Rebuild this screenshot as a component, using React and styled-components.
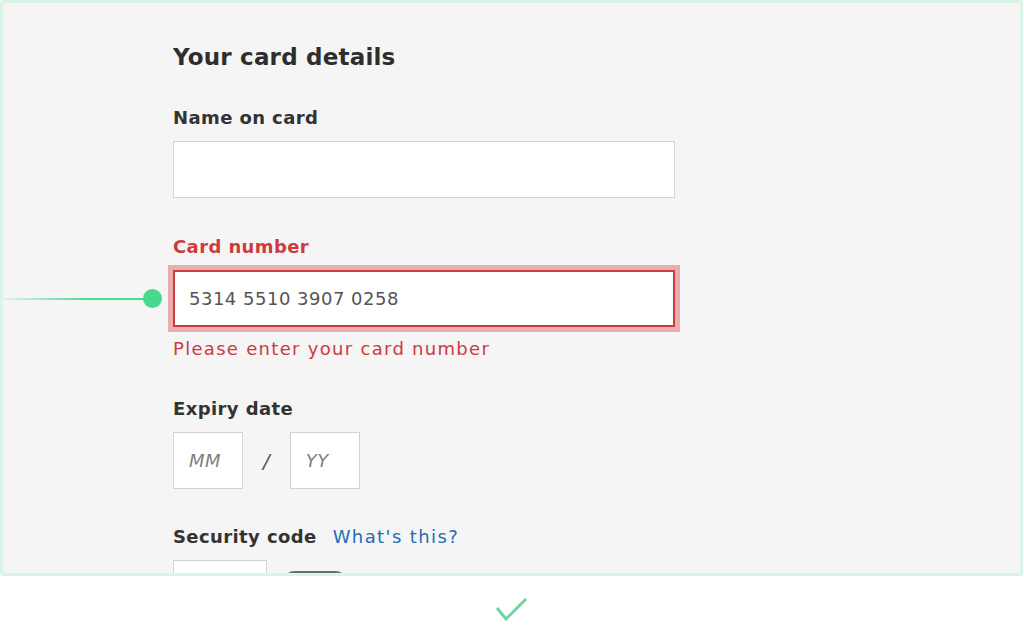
import React from 'react';
import styled, { createGlobalStyle } from 'styled-components';

const GlobalStyle = createGlobalStyle`
  html, body {
    margin: 0;
    padding: 0;
    background: #ffffff;
  }
  body {
    font-family: "DejaVu Sans", "Noto Sans", sans-serif;
  }
`;

const Page = styled.div`
  width: 1024px;
  height: 634px;
  display: flex;
  flex-direction: column;
  align-items: center;
`;

const Frame = styled.div`
  width: 1023px;
  height: 576px;
  box-sizing: border-box;
  border: 3px solid #d8f5e6;
  border-radius: 3px;
  background: #f5f5f5;
  overflow: hidden;
  align-self: flex-start;
`;

const Form = styled.div`
  display: flex;
  flex-direction: column;
  padding: 38px 0 0 170px;
  color: #333333;
`;

const Heading = styled.h2`
  margin: 0 0 33px;
  font-size: 23px;
  line-height: 32px;
  font-weight: 600;
  letter-spacing: 0.2px;
  color: #2e2e2e;
`;

const Label = styled.div`
  font-size: 18px;
  line-height: 24px;
  font-weight: 600;
  letter-spacing: 0.4px;
  color: ${p => (p.error ? '#cc3b3f' : '#333333')};
  margin-bottom: 11px;
  display: flex;
  gap: 16px;
`;

const HelpLink = styled.a`
  font-weight: 400;
  letter-spacing: 1.4px;
  color: #1f6db5;
  text-decoration: none;
`;

const Field = styled.div`
  display: flex;
  flex-direction: column;
  margin-bottom: ${p => p.gap || 36}px;
`;

const InputRow = styled.div`
  position: relative;
  display: flex;
  align-items: center;
  gap: 20px;
`;

const TextBox = styled.div`
  box-sizing: border-box;
  width: ${p => p.width || 502}px;
  height: 57px;
  background: #ffffff;
  border: ${p => (p.error ? '2px solid #cf3a3e' : '1px solid #d2d2d2')};
  box-shadow: ${p => (p.error ? '0 0 0 5px #e9aeb0' : 'none')};
  display: flex;
  align-items: center;
  padding-left: ${p => (p.error ? 14 : 15)}px;
  font-size: 18px;
  letter-spacing: 0.5px;
  color: #555555;
`;

const Placeholder = styled.span`
  font-style: italic;
  color: #808080;
  font-size: 18px;
`;

const Slash = styled.span`
  font-size: 20px;
  color: #555555;
  font-style: italic;
`;

const ErrorText = styled.div`
  margin-top: 10px;
  font-size: 18px;
  line-height: 24px;
  letter-spacing: 1.3px;
  color: #cc3b3f;
`;

const Connector = styled.div`
  position: absolute;
  right: calc(100% + 20px);
  top: 50%;
  width: 160px;
  height: 2px;
  transform: translateY(-50%);
  background: linear-gradient(to right, rgba(74, 217, 143, 0), #4ad98f 60%);
  display: flex;
  justify-content: flex-end;
  align-items: center;
`;

const Dot = styled.span`
  width: 19px;
  height: 19px;
  border-radius: 50%;
  background: #48d98d;
  margin-right: -9px;
  flex: none;
`;

const SecurityRow = styled.div`
  display: flex;
  align-items: flex-start;
  gap: 17px;
`;

const Pill = styled.div`
  width: 62px;
  height: 20px;
  border-radius: 10px;
  background: #6e6e6e;
  margin-top: 11px;
`;

const CheckWrap = styled.div`
  margin-top: 22px;
  display: flex;
  justify-content: center;
`;

export default function App() {
  return (
    <>
      <GlobalStyle />
      <Page>
        <Frame>
          <Form>
            <Heading>Your card details</Heading>

            <Field gap={37}>
              <Label>Name on card</Label>
              <TextBox />
            </Field>

            <Field gap={36}>
              <Label error>Card number</Label>
              <InputRow>
                <Connector>
                  <Dot />
                </Connector>
                <TextBox error>5314 5510 3907 0258</TextBox>
              </InputRow>
              <ErrorText>Please enter your card number</ErrorText>
            </Field>

            <Field gap={36}>
              <Label>Expiry date</Label>
              <InputRow>
                <TextBox width={70}>
                  <Placeholder>MM</Placeholder>
                </TextBox>
                <Slash>/</Slash>
                <TextBox width={70}>
                  <Placeholder>YY</Placeholder>
                </TextBox>
              </InputRow>
            </Field>

            <Field>
              <Label>
                Security code <HelpLink href="#">What's this?</HelpLink>
              </Label>
              <SecurityRow>
                <TextBox width={94} />
                <Pill />
              </SecurityRow>
            </Field>
          </Form>
        </Frame>
        <CheckWrap>
          <svg width="34" height="26" viewBox="0 0 34 26">
            <path d="M2 10 L11 21 L31 1" fill="none" stroke="#6ed59c" strokeWidth="3" />
          </svg>
        </CheckWrap>
      </Page>
    </>
  );
}
